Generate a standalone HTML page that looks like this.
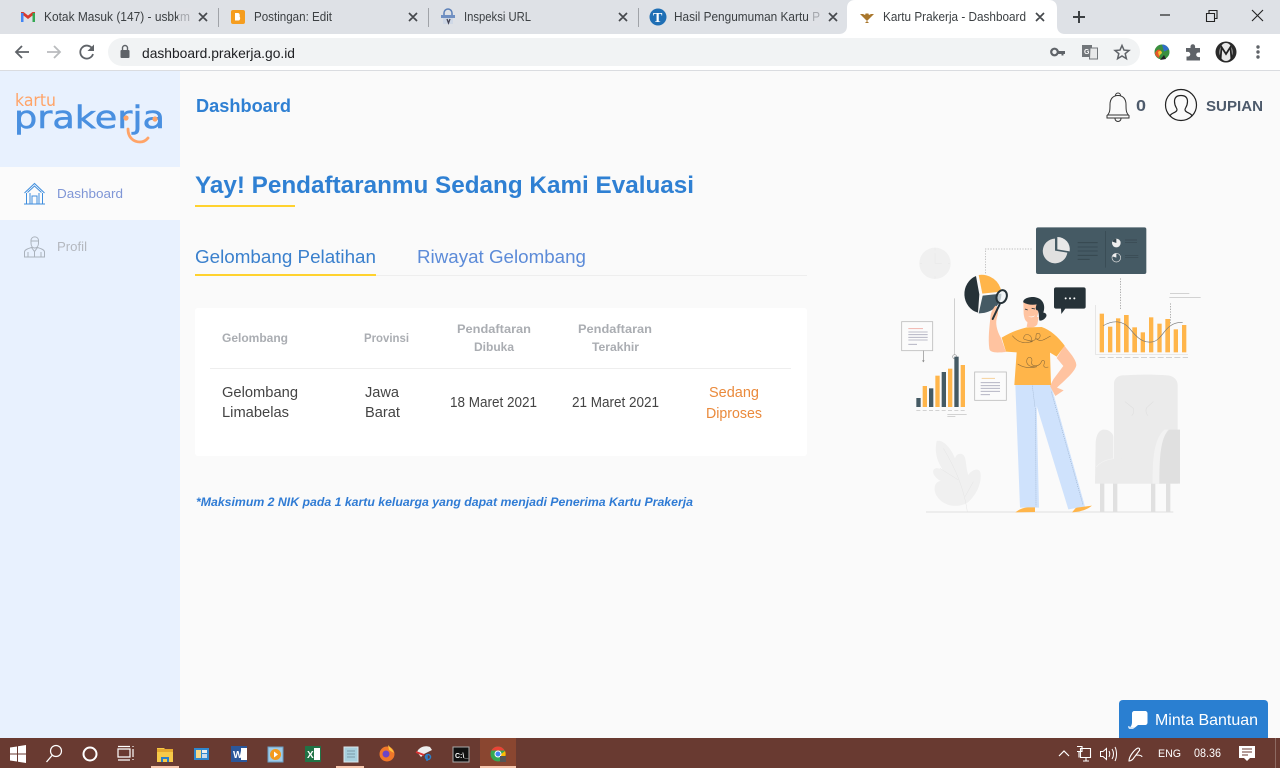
<!DOCTYPE html>
<html lang="id"><head><meta charset="utf-8"><title>Kartu Prakerja - Dashboard</title>
<style>
html,body{margin:0;padding:0;width:1280px;height:768px;overflow:hidden;background:#fafafa}
svg{display:block}
text{font-family:"Liberation Sans",sans-serif}
</style></head><body>
<svg width="1280" height="768" viewBox="0 0 1280 768" xmlns="http://www.w3.org/2000/svg">
<!-- page -->
<rect width="1280" height="768" fill="#fafafa"/>
<rect x="0" y="71" width="180" height="667" fill="#e8f1fe"/>
<rect x="0" y="167" width="180" height="53" fill="#fbfbfb"/>

<!-- tab strip -->
<rect width="1280" height="34" fill="#dee1e6"/>
<rect y="34" width="1280" height="36" fill="#fff"/>
<rect y="70" width="1280" height="1" fill="#dadce0"/>
<path d="M839 34c5 0 8-3 8-8V8c0-5 3-8 8-8h194c5 0 8 3 8 8v18c0 5 3 8 8 8z" fill="#fff"/>
<g fill="#a0a3a8"><rect x="218" y="8" width="1" height="19"/><rect x="428" y="8" width="1" height="19"/><rect x="638" y="8" width="1" height="19"/></g>
<!-- favicons -->
<path d="M21 22V12h2.500l4.500 3.500 4.500-3.500H35v10h-2.500v-6.500L28 19l-4.500-3.500V22z" fill="#d9392d"/>
<rect x="21" y="13" width="2.500" height="9" fill="#4285f4"/><rect x="32.500" y="13" width="2.500" height="9" fill="#34a853"/>
<rect x="231" y="10" width="14" height="14" rx="2" fill="#f59d1f"/><path d="M235 13h3c2 0 2 3 1.500 3.500 1 .5 1 4-1 4H235z" fill="#fff"/>
<path d="M444 16v-3a3 3 0 0 1 8 0v3" fill="none" stroke="#5a7fb8" stroke-width="1.500"/><rect x="441" y="15" width="14" height="3" fill="#6f8fc2"/><rect x="443" y="18" width="10" height="6" fill="#cfd8e6"/><path d="M447 19l1.500 4 1.500-4" fill="none" stroke="#445" stroke-width="1.300"/>
<circle cx="658" cy="17" r="8.500" fill="#1f6fb5"/><text x="653" y="22" font-size="14" font-weight="bold" fill="#fff" style="font-family:'Liberation Serif',serif">T</text>
<path d="M867 21l-7-7 3 0 2 1 1-2 1 1 1-1 1 2 2-1 3 0-7 7zm0 0l-2 2h4z" fill="#a9772c"/>
<!-- tab titles -->
<g font-size="12.500" fill="#3c4043">
<text x="44" y="21" textLength="146" lengthAdjust="spacingAndGlyphs">Kotak Masuk (147) - usbkm</text>
<text x="254" y="21" textLength="78" lengthAdjust="spacingAndGlyphs">Postingan: Edit</text>
<text x="464" y="21" textLength="67" lengthAdjust="spacingAndGlyphs">Inspeksi URL</text>
<text x="674" y="21" textLength="146" lengthAdjust="spacingAndGlyphs">Hasil Pengumuman Kartu P</text>
<text x="883" y="21" textLength="143" lengthAdjust="spacingAndGlyphs">Kartu Prakerja - Dashboard</text>
</g>
<rect x="178" y="8" width="14" height="18" fill="#dee1e6" opacity=".65"/>
<rect x="808" y="8" width="14" height="18" fill="#dee1e6" opacity=".65"/>
<g stroke="#45484c" stroke-width="1.700" fill="none">
<path d="M199 13l8 8m0-8l-8 8M409 13l8 8m0-8l-8 8M619 13l8 8m0-8l-8 8M829 13l8 8m0-8l-8 8M1036 13l8 8m0-8l-8 8"/>
</g>
<path d="M1079 11v12M1073 17h12" stroke="#3c4043" stroke-width="2" fill="none"/>
<path d="M1160 15h10" stroke="#222" stroke-width="1.200"/>
<path d="M1206.500 13.500h8v8h-8zM1209 13v-2.500h8v8h-2.500" fill="none" stroke="#222" stroke-width="1.100"/>
<path d="M1252 10l11 11m0-11l-11 11" stroke="#222" stroke-width="1.100"/>

<!-- toolbar -->
<path d="M29 52H16m6-6l-6 6 6 6" fill="none" stroke="#5f6368" stroke-width="1.800"/>
<path d="M47 52h13m-6-6l6 6-6 6" fill="none" stroke="#b9bbbe" stroke-width="1.800"/>
<path d="M92.500 49a6.500 6.500 0 1 0 .5 5" fill="none" stroke="#5f6368" stroke-width="1.800"/><path d="M94 44.500v6.500h-6.500z" fill="#5f6368"/>
<rect x="108" y="38" width="1032" height="28" rx="14" fill="#f1f3f4"/>
<rect x="120.500" y="50" width="9" height="8" rx="1" fill="#5f6368"/><path d="M122.500 50v-2a2.500 2.500 0 0 1 5 0v2" fill="none" stroke="#5f6368" stroke-width="1.400"/>
<text x="142" y="58" font-size="14" fill="#202124" textLength="153" lengthAdjust="spacingAndGlyphs">dashboard.prakerja.go.id</text>
<circle cx="1054.500" cy="52" r="3.300" fill="none" stroke="#5f6368" stroke-width="2.200"/><path d="M1057 51h8v3h-1.500v1.500h-2V54h-4.500z" fill="#5f6368"/>
<rect x="1082" y="45" width="10" height="12" fill="#72767a"/><path d="M1090 48h7.500v11h-8z" fill="#e8e9ea" stroke="#72767a"/><text x="1084" y="54" font-size="7" fill="#fff" font-weight="bold">G</text>
<path d="M1122 45.500l2 4.600 5 .4-3.800 3.200 1.200 5-4.400-2.700-4.400 2.700 1.200-5-3.800-3.200 5-.4z" fill="none" stroke="#5f6368" stroke-width="1.500"/>
<circle cx="1162" cy="52" r="7.500" fill="#3a8f3f"/><path d="M1162 44.500a7.500 7.500 0 0 1 7 5l-5 2z" fill="#2f6dc9"/><path d="M1155 53c2-4 5-4 6-2l-2 7c-2-1-4-3-4-5z" fill="#e5562a"/><path d="M1158 52c2-2 4-1 4 1l-3 3z" fill="#f4c430"/><path d="M1160 60l6-1-2-4z" fill="#222"/>
<path d="M1186 48h4.500v-1.500a2.300 2.300 0 0 1 4.600 0V48h4.900v4.500h-1.500a2.300 2.300 0 0 0 0 4.600h1.500v3.400h-13.500v-4h1.500a2.300 2.300 0 0 0 0-4.600H1186z" fill="#5f6368"/>
<circle cx="1226" cy="52" r="10.500" fill="#2a2a2a"/><ellipse cx="1226" cy="52" rx="6.500" ry="9" fill="#e8e8e8"/><path d="M1220.500 60l1-13 4.500 7 4.500-7 1 13" fill="none" stroke="#222" stroke-width="1.800"/>
<g fill="#5f6368"><circle cx="1258" cy="47" r="1.700"/><circle cx="1258" cy="52" r="1.700"/><circle cx="1258" cy="57" r="1.700"/></g>

<!-- logo -->
<text x="15" y="106" font-size="17" fill="#ffa468" textLength="41" lengthAdjust="spacingAndGlyphs" style="font-family:'DejaVu Sans',sans-serif">kartu</text>
<text x="14" y="128" font-size="31" fill="#4a90e0" stroke="#4a90e0" stroke-width=".5" textLength="151" lengthAdjust="spacingAndGlyphs" style="font-family:'DejaVu Sans',sans-serif">prakerja</text>
<circle cx="126" cy="118" r="2.600" fill="#ffa468"/><circle cx="155" cy="119" r="2.600" fill="#ffa468"/>
<path d="M128 129c0 9 6 13 12 13 3 0 6-1.500 8-4" fill="none" stroke="#ffa468" stroke-width="2.800" stroke-linecap="round"/>

<!-- sidebar -->
<g fill="none" stroke="#3f8ede" stroke-width="1">
<path d="M24.500 193l10-9.500 10 9.500M27.500 192.500l7-6.500 7 6.500M26.500 193v10.500M42.500 193v10.500M30 193v10.500M39 193v10.500M24 204h21M32 204v-8h5v8"/>
</g>
<text x="57" y="198" font-size="13" fill="#7f96d6" textLength="66" lengthAdjust="spacingAndGlyphs">Dashboard</text>
<g fill="none" stroke="#aab2bc" stroke-width="1">
<path d="M31 243v-3a3.800 3.800 0 0 1 7.500 0v3c0 3-1.500 5-3.800 5s-3.700-2-3.700-5zM31 241h7.500M24.500 257v-5c0-2.500 4-3.500 7-4.500l3 4 3-4c3 1 7 2 7 4.500v5zM34.500 251.500v5.500M28 252v5M41 252v5"/>
</g>
<text x="57" y="251" font-size="13" fill="#b4b8bf" textLength="30" lengthAdjust="spacingAndGlyphs">Profil</text>

<!-- header -->
<text x="196" y="112" font-size="18" font-weight="bold" fill="#2f80d3" textLength="95" lengthAdjust="spacingAndGlyphs">Dashboard</text>
<g fill="none" stroke="#333" stroke-width="1">
<path d="M1107 115.500c3-2.500 3-6 3-11 0-5 2.500-9 8-9s8 4 8 9c0 5 0 8.500 3 11v2.500h-22zM1107.500 115h21M1115 118.500a3 3 0 0 0 6 0M1115.500 95.500a2.500 2.500 0 0 1 5 0"/>
</g>
<text x="1136" y="111" font-size="16" font-weight="bold" fill="#4d5a6b" textLength="10" lengthAdjust="spacingAndGlyphs">0</text>
<circle cx="1181" cy="105" r="15.500" fill="none" stroke="#222" stroke-width="1.200"/>
<path d="M1170 116c1-3.500 7-3 7-6.500 0-1.500-2.500-3-2.500-8 0-4 2.500-6 6.500-6s6.500 2 6.500 6c0 5-2.500 6.500-2.500 8 0 3.500 6 3 7 6.500" fill="none" stroke="#222" stroke-width="1.200"/>
<text x="1206" y="111" font-size="15" font-weight="bold" fill="#4d5a6b" textLength="57" lengthAdjust="spacingAndGlyphs">SUPIAN</text>

<!-- heading -->
<text x="195" y="193" font-size="24" font-weight="bold" fill="#2f80d3" textLength="499" lengthAdjust="spacingAndGlyphs">Yay! Pendaftaranmu Sedang Kami Evaluasi</text>
<rect x="195" y="205" width="100" height="2" fill="#ffd22e"/>
<text x="195" y="263" font-size="18" fill="#3a80cd" textLength="181" lengthAdjust="spacingAndGlyphs">Gelombang Pelatihan</text>
<text x="417" y="263" font-size="18" fill="#5c8bd8" textLength="169" lengthAdjust="spacingAndGlyphs">Riwayat Gelombang</text>
<rect x="195" y="275" width="612" height="1" fill="#eeeeee"/>
<rect x="195" y="274" width="181" height="2" fill="#ffd22e"/>

<!-- card -->
<rect x="195" y="308" width="612" height="148" rx="3" fill="#fff"/>
<rect x="210" y="368" width="581" height="1" fill="#eeeeee"/>
<g font-size="12" font-weight="bold" fill="#aaadb2">
<text x="222" y="342" textLength="66" lengthAdjust="spacingAndGlyphs">Gelombang</text>
<text x="364" y="342" textLength="45" lengthAdjust="spacingAndGlyphs">Provinsi</text>
<text x="457" y="333" textLength="74" lengthAdjust="spacingAndGlyphs">Pendaftaran</text>
<text x="474" y="351" textLength="40" lengthAdjust="spacingAndGlyphs">Dibuka</text>
<text x="578" y="333" textLength="74" lengthAdjust="spacingAndGlyphs">Pendaftaran</text>
<text x="592" y="351" textLength="47" lengthAdjust="spacingAndGlyphs">Terakhir</text>
</g>
<g font-size="14.500" fill="#444">
<text x="222" y="397" textLength="76" lengthAdjust="spacingAndGlyphs">Gelombang</text>
<text x="222" y="417" textLength="67" lengthAdjust="spacingAndGlyphs">Limabelas</text>
<text x="365" y="397" textLength="34" lengthAdjust="spacingAndGlyphs">Jawa</text>
<text x="365" y="417" textLength="35" lengthAdjust="spacingAndGlyphs">Barat</text>
<text x="450" y="407" textLength="87" lengthAdjust="spacingAndGlyphs">18 Maret 2021</text>
<text x="572" y="407" textLength="87" lengthAdjust="spacingAndGlyphs">21 Maret 2021</text>
</g>
<g font-size="14.500" fill="#ea8a3c">
<text x="709" y="397" textLength="50" lengthAdjust="spacingAndGlyphs">Sedang</text>
<text x="706" y="418" textLength="56" lengthAdjust="spacingAndGlyphs">Diproses</text>
</g>
<text x="196" y="506" font-size="12" font-weight="bold" font-style="italic" fill="#2f7bd4" textLength="497" lengthAdjust="spacingAndGlyphs">*Maksimum 2 NIK pada 1 kartu keluarga yang dapat menjadi Penerima Kartu Prakerja</text>

<!-- illustration: coordinates are 3x around (890,215) -->
<g transform="translate(890 215) scale(.33333)">
<circle cx="135" cy="145" r="47" fill="#f0f0f0"/>
<path d="M135 115v30h20M135 100v6M135 184v6M90 145h6M174 145h6" stroke="#e6e6e6" stroke-width="1.500" fill="none"/>
<path d="M286 175V102H428" fill="none" stroke="#aaa" stroke-width="2" stroke-dasharray="4 4"/>
<rect x="438" y="37" width="331" height="140" rx="6" fill="#455a64"/>
<path d="M495 107V71a37 37 0 1 0 37 42z" fill="#e0e0e0"/><path d="M502 66a37 37 0 0 1 37 43l-37-6z" fill="#e8e8e8"/>
<path d="M563 83h60M563 96h60M563 108h60M563 121h60M563 133h36" stroke="#35454d" stroke-width="2.500"/>
<path d="M647 48v110" stroke="#37474f" stroke-width="2"/>
<circle cx="679" cy="84" r="13" fill="#eee"/><path d="M679 84V71a13 13 0 0 0-12 9z" fill="#37474f"/>
<circle cx="679" cy="128" r="13" fill="#455a64" stroke="#ddd" stroke-width="2"/><path d="M679 128v-13a13 13 0 0 0-12 9z" fill="#eee"/>
<path d="M705 82h36M705 127h40M705 75h36M705 121h40" stroke="#37474f" stroke-width="2"/>
<path d="M691 190v95" stroke="#888" stroke-width="2" stroke-dasharray="4 4"/>
<!-- big pie -->
<path d="M258 183a55 58 0 0 0 6 110l4-55z" fill="#263238"/>
<path d="M266 180a60 58 0 0 1 68 50l-57 6z" fill="#ffb54a"/>
<path d="M278 242l56-6c2 28-25 60-68 59z" fill="#455a64"/>
<path d="M194 250v170" stroke="#bbb" stroke-width="2"/>
<circle cx="194" cy="425" r="6" fill="#fafafa" stroke="#999" stroke-width="2"/>
<!-- left doc -->
<rect x="35" y="320" width="93" height="87" fill="#fbfbfb" stroke="#bdbdbd" stroke-width="2.500"/>
<path d="M55 341h44" stroke="#f0a8a0" stroke-width="2.500"/><path d="M55 351h58M55 359h58M55 367h58M55 375h58M55 388h26" stroke="#aab" stroke-width="2.500"/>
<path d="M100 407v32" stroke="#888" stroke-width="2"/><path d="M96 436h8l-4 6z" fill="#888"/>
<!-- left chart -->
<g fill="#455a64"><rect x="79" y="549" width="13" height="27"/><rect x="117" y="520" width="13" height="56"/><rect x="155" y="471" width="13" height="105"/><rect x="193" y="425" width="13" height="151"/></g>
<g fill="#ffb54a"><rect x="98" y="513" width="13" height="63"/><rect x="136" y="482" width="13" height="94"/><rect x="174" y="461" width="13" height="115"/><rect x="212" y="450" width="13" height="126"/></g>
<path d="M79 586h150" stroke="#bbb" stroke-width="2" stroke-dasharray="12 7"/><path d="M172 598h58M172 605h24" stroke="#bbb" stroke-width="2"/>
<!-- mid doc -->
<rect x="254" y="471" width="95" height="85" fill="#fbfbfb" stroke="#bdbdbd" stroke-width="2.500"/>
<path d="M275 490h40" stroke="#f4c98a" stroke-width="2.500"/><path d="M272 503h58M272 512h58M272 520h58M272 529h58M272 539h28" stroke="#aab" stroke-width="2.500"/>
<!-- right chart -->
<path d="M616 270v148h278" fill="none" stroke="#ddd" stroke-width="2"/>
<g fill="#ffb54a"><rect x="629" y="296" width="13" height="116"/><rect x="654" y="335" width="13" height="77"/><rect x="678" y="310" width="13" height="102"/><rect x="702" y="300" width="14" height="112"/><rect x="727" y="337" width="14" height="75"/><rect x="752" y="352" width="13" height="60"/><rect x="777" y="307" width="13" height="105"/><rect x="802" y="326" width="13" height="86"/><rect x="826" y="312" width="14" height="100"/><rect x="851" y="343" width="13" height="69"/><rect x="876" y="330" width="13" height="82"/></g>
<path d="M640 332c30-18 60-15 80 10s40 45 70 38 35-60 88-58" fill="none" stroke="#777" stroke-width="2"/>
<path d="M628 427h266" stroke="#bbb" stroke-width="2" stroke-dasharray="18 7"/>
<path d="M840 236h58M838 247h94" stroke="#bbb" stroke-width="2"/><path d="M841 265v60" stroke="#888" stroke-width="2" stroke-dasharray="4 4"/>
<!-- plant -->
<path d="M140 678c20-6 45 25 55 52 5-18 25-18 30-2 4 16 4 35 10 52 8-14 30-24 36-8 6 30-12 70-40 92-30 16-70 10-90-20-14-22-6-46 12-46-18-8-30-28-20-36 8-6 20 0 28 6-14-20-30-50-21-90z" fill="#f0f0f0"/>
<path d="M160 700c30 50 60 110 72 190M150 760l55 35M250 800l-25 45" stroke="#e4e4e4" stroke-width="1.500" fill="none"/>
<!-- chair -->
<path d="M630 805h13v86h-13zM669 805h13v86h-13zM783 805h13v86h-13zM828 805h13v86h-13z" fill="#e0e0e0"/>
<path d="M672 505c0-15 15-25 30-24 40-3 90-3 130 0 15 1 31 10 31 30v295H672z" fill="#ebebeb"/>
<path d="M640 644c-15 2-22 20-23 40l-2 122h200v-75c-50-2-120-2-145 0v-65c0-12-15-24-30-22z" fill="#ebebeb"/>
<path d="M671 731c-20 2-40 10-52 25" fill="none" stroke="#f3f3f3" stroke-width="2"/>
<path d="M788 806c0-60 0-130 35-162h12c-25 30-25 100-25 162z" fill="#f2f2f2"/>
<path d="M808 806c0-70 2-140 30-162h32v162z" fill="#e0e0e0"/>
<path d="M705 560l25 20c2 10 0 18-5 22M790 560l-20 18c-4 8-2 18 4 24" fill="none" stroke="#e0e0e0" stroke-width="2"/>
<!-- ground -->
<path d="M108 891h742" stroke="#e0e0e0" stroke-width="3"/>
<!-- person: jeans -->
<path d="M376 510h107l102 365-50 8-95-310 7 305h-57z" fill="#cfe2fc"/>
<path d="M437 580l1 295M484 530l95 340M427 512l8 65" fill="none" stroke="#8ea3bd" stroke-width="1.500" stroke-dasharray="3 3"/>
<path d="M376 892c15-12 30-15 38-15l21 0v14zM546 892c8-8 8-12 15-14l45-6c-12 10-30 18-60 20z" fill="#ffb54a"/>
<!-- arms -->
<path d="M523 392c15 20 35 40 36 58-2 20-40 50-58 68l20 8-25 17-16-30 10-20 30-40-20-24z" fill="#ffc3a0"/>
<path d="M317 272c8 4 10 20 4 35-5 15-2 38 12 62l15 42c-25 2-48 4-50-10-4-30 0-65 4-100 2-12 10-25 15-29z" fill="#ffc3a0"/>
<!-- shirt -->
<path d="M335 368c25-15 50-25 75-31l45-1c25 8 50 30 69 56l-24 33-20-12 3 97H373l7-98-32-2z" fill="#ffb54a"/>
<path d="M367 362c20 25 40 22 60 18-15-8-30-2-25-15 5-12 22-5 22 5 0 15-10 10 10 5 8-6 0-18 8-20 15-3 8 25-5 15 15 15 30 0 45-7" fill="none" stroke="#8a6a3a" stroke-width="1.700"/>
<path d="M383 447c20 13 40 13 58 8-20 2-35-5-30-22 5-12 18-5 14 8-3 15 20 15 28 2 3-12 14-8 9 5-3 10 5 10 13 8" fill="none" stroke="#8a6a3a" stroke-width="1.700"/>
<!-- head -->
<path d="M412 325l-2 10c10 5 25 3 32-7l4-22-34 0z" fill="#ffc3a0"/>
<path d="M400 262c6 0 42-5 45 10 3 25-5 50-28 50-10 0-14-10-16-25z" fill="#ffc3a0"/>
<path d="M400 262c-3-12 25-20 40-14 20 5 27 25 20 45 8 0 12 8 8 13-5 8-15 13-20 10-2-10 0-22-5-30-8 0-6-10-3-18-15 3-30 0-40-6z" fill="#263238"/>
<path d="M415 303c6 3 14 2 20-2-2 6-16 8-20 2z" fill="#fff"/>
<path d="M405 282l8 3M425 280l10 2" stroke="#263238" stroke-width="2.500"/>
<!-- bubble -->
<path d="M498 217h83c4 0 6 2 6 6v52c0 4-2 6-6 6h-55l-12 16-1-16h-15c-4 0-6-2-6-6v-52c0-4 2-6 6-6z" fill="#263238"/>
<g fill="#fff"><circle cx="527" cy="250" r="3"/><circle cx="540" cy="250" r="3"/><circle cx="553" cy="250" r="3"/></g>
<!-- magnifier -->
<path d="M329 268l-21 44" stroke="#263238" stroke-width="6" stroke-linecap="round"/>
<ellipse cx="335" cy="245" rx="15" ry="20" transform="rotate(20 335 245)" fill="#eef3f6" fill-opacity=".7" stroke="#263238" stroke-width="6"/>
</g>

<!-- help button -->
<path d="M1119 738v-34c0-2.500 1.500-4 4-4h141c2.500 0 4 1.500 4 4v34z" fill="#2a7fd1"/>
<path d="M1134.500 711h10.500c1.500 0 2.500 1 2.500 2.500v9c0 1.500-1 2.500-2.500 2.500h-7l-3 2.500h-5c1-1 2-3 2-5v-9c0-1.500 1-2.500 2.500-2.500z" fill="#fff"/>
<path d="M1128 726c2 .5 4 1.500 7 1.500l-2 1.500h-3c-1 0-2-1-2-3z" fill="#cfe2f6"/>
<text x="1155" y="725" font-size="16" fill="#fff" textLength="103" lengthAdjust="spacingAndGlyphs">Minta Bantuan</text>

<!-- taskbar -->
<rect y="738" width="1280" height="30" fill="#693a31"/>
<rect x="480" y="738" width="36" height="30" fill="#8a4630"/>
<rect x="151" y="766" width="28" height="2" fill="#f6c6ad"/><rect x="336" y="766" width="28" height="2" fill="#f6c6ad"/><rect x="480" y="766" width="36" height="2" fill="#f6c6ad"/>
<path d="M10 747.500l7-1v7h-7zM18 746.300l8-1.300v8.500h-8zM10 754.500h7v7l-7-1zM18 754.500h8v8.500l-8-1.300z" fill="#fff"/>
<circle cx="56" cy="751" r="5.500" fill="none" stroke="#fff" stroke-width="1.200"/><path d="M52 755.500l-5.500 6.500" stroke="#fff" stroke-width="1.300"/>
<circle cx="90" cy="754" r="6.500" fill="none" stroke="#fff" stroke-width="2"/>
<path d="M118 749h12v8h-12zM118 746.500h12M118 760h12M133 749v8M133 746v1M133 759v1" fill="none" stroke="#fff" stroke-width="1.200"/>
<path d="M157 748h7l2 2h7v12h-16z" fill="#f7c948"/><rect x="157" y="749" width="16" height="3" fill="#e6a82e"/><path d="M161 762v-5h8v5h-2v-3h-4v3z" fill="#2b7fc9"/>
<rect x="194" y="748" width="15" height="12" fill="#2f88cf"/><rect x="196" y="750" width="5" height="8" fill="#f5d98a"/><rect x="202" y="750" width="5" height="3" fill="#eee"/><rect x="202" y="754" width="5" height="4" fill="#cde"/>
<rect x="231" y="746" width="16" height="16" fill="#2b579a"/><rect x="241" y="748" width="6" height="12" fill="#fff"/><text x="233" y="758" font-size="10" font-weight="bold" fill="#fff">W</text>
<rect x="268" y="747" width="15" height="15" fill="#9ecbe8" stroke="#6a9ec2"/><circle cx="275.500" cy="754.500" r="5.500" fill="#f39a1e"/><path d="M274 751.500l4 3-4 3z" fill="#fff"/>
<rect x="305" y="746" width="16" height="16" fill="#217346"/><rect x="314" y="748" width="6" height="12" fill="#fff"/><text x="307" y="758" font-size="10" font-weight="bold" fill="#fff">X</text>
<path d="M344 747h14v15h-14z" fill="#a8d0de" stroke="#dbe7ec"/><path d="M347 751h8M347 754h8M347 757h8" stroke="#7c9aa8"/>
<circle cx="387" cy="754" r="7.500" fill="#f0772a"/><circle cx="386" cy="754" r="3.500" fill="#6b45c8"/><path d="M388 745c3 3 5 5 6 8l-5-3z" fill="#ffc23c"/>
<path d="M417 752c2-5 8-7 13-5l2 3-8 4-3 3z" fill="#eee"/><path d="M416 752l8 3" stroke="#d33" stroke-width="2"/><circle cx="428" cy="757" r="2.500" fill="none" stroke="#2b7fc9" stroke-width="1.500"/><path d="M427 754v7" stroke="#2b7fc9" stroke-width="1.500"/>
<rect x="453" y="747" width="16" height="15" fill="#111" stroke="#aaa"/><text x="455" y="758" font-size="7" font-weight="bold" fill="#fff">C:\_</text>
<circle cx="498" cy="754" r="7.500" fill="#34a853"/><path d="M498 746.500a7.500 7.500 0 0 1 6.500 4h-6.500zM491.500 750.500a7.500 7.500 0 0 1 6.500-4v4z" fill="#ea4335"/><path d="M505 751a7.500 7.500 0 0 1-4 10l-1-6z" fill="#fbbc05"/><circle cx="498" cy="754" r="3" fill="#4285f4" stroke="#fff"/><rect x="500" y="756" width="6" height="6" fill="#555"/>
<!-- tray -->
<path d="M1059 756l5-5 5 5" fill="none" stroke="#fff" stroke-width="1.200"/>
<path d="M1080.500 748.500h10v9h-10zM1077 746.500h5v5h-5M1079 751.500v6M1083 761h6M1086 757.500v3.500" fill="none" stroke="#fff" stroke-width="1.100"/>
<path d="M1100.500 751.500h2.500l3.500-3v11l-3.500-3h-2.500zM1109 751c1 2 1 4 0 6M1112 749c2 3 2 7 0 10M1115 747c2 4 2 10 0 14" fill="none" stroke="#fff" stroke-width="1"/>
<path d="M1129 761c0-5 6-12 9-13 2 0 2 2 1 3l-6 8c-2 2-4 2-4 2zM1136 755c2 0 6 0 6 2" fill="none" stroke="#fff" stroke-width="1.100"/>
<text x="1158" y="757" font-size="11" fill="#fff" textLength="23" lengthAdjust="spacingAndGlyphs">ENG</text>
<text x="1194" y="757" font-size="11.500" fill="#fff" textLength="27" lengthAdjust="spacingAndGlyphs">08.36</text>
<path d="M1239 746h16v12h-5l-3 3-3-3h-5z" fill="#fff"/><path d="M1242 749h10M1242 752h10M1242 755h6" stroke="#693a31" stroke-width="1"/>
<rect x="1275" y="738" width="1" height="30" fill="#8d6a62"/>
</svg>
</body></html>
